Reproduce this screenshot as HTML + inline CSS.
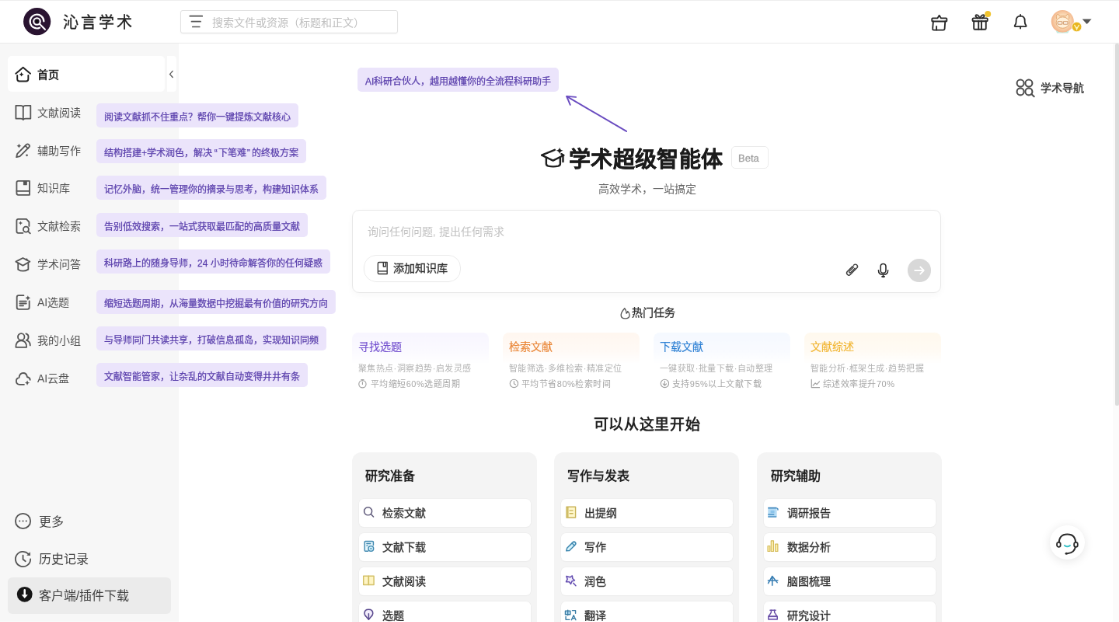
<!DOCTYPE html>
<html lang="zh-CN"><head><meta charset="utf-8"><title>沁言学术</title>
<style>
*{margin:0;padding:0}
html,body{width:1119px;height:622px;overflow:hidden;background:#fff}
#root{position:absolute;left:0;top:0;width:1440px;height:801px;transform:scale(0.777083);transform-origin:0 0;will-change:transform;font-family:"Liberation Sans",sans-serif;color:#333;overflow:hidden}
.a{position:absolute}
.t{position:absolute;white-space:nowrap}
.tip{position:absolute;height:31px;line-height:37px;padding:0 10px 0 9.6px;background:#ebe4fb;color:#5b40ad;font-size:12px;font-weight:400;-webkit-text-stroke:0.25px #5b40ad;border-radius:5px;white-space:nowrap;box-sizing:border-box}
</style></head><body><div id="root">
<div class="a" style="left:0px;top:0px;width:1440px;height:55.98px;background:#fff;border-bottom:1px solid #ebebeb;box-sizing:border-box;"></div>
<div class="a" style="left:0px;top:0px;width:1440px;height:1.42px;background:#eeeeee;"></div>
<svg class="a" style="left:30.37px;top:10.29px;width:35.26px;height:35.26px;" viewBox="0 0 27.4 27.4" >
<circle cx="13.7" cy="13.7" r="13.7" fill="#2a1431"/>
<path d="M20.5 13.6A6.9 6.9 0 1 0 16.3 20" fill="none" stroke="#fff" stroke-width="1.7" stroke-linecap="round"/>
<circle cx="13.6" cy="13.6" r="3.3" fill="none" stroke="#fff" stroke-width="1.6"/>
<circle cx="13.6" cy="13.6" r="1.5" fill="#0d0d0d"/>
<path d="M16.2 16.2L21.7 21.6" stroke="#fff" stroke-width="1.7" stroke-linecap="round"/></svg>
<div class="t" style="left:80.72px;top:19.33px;font-size:20px;line-height:20px;color:#222;font-weight:400;letter-spacing:3.1px;-webkit-text-stroke:0.32px #222;">沁言学术</div>
<div class="a" style="left:232.41px;top:12.87px;width:279.25px;height:30.63px;border:1px solid #e2e2e2;border-radius:3px;box-sizing:border-box;background:#fff;box-shadow:0 1px 2px rgba(0,0,0,.03);"></div>
<svg class="a" style="left:241.93px;top:18.02px;width:20.59px;height:20.59px;" viewBox="0 0 16 16" ><path d="M1.8 2.1H14.2M3.5 7.5H12.5M4.5 12.8H11.5" stroke="#555" stroke-width="1.3" stroke-linecap="round"/></svg>
<div class="t" style="left:273.4px;top:22.46px;font-size:14px;line-height:14px;color:#bfbfbf;font-weight:400;">搜索文件或资源（标题和正文）</div>
<div class="a" style="left:0px;top:55.98px;width:229.71px;height:744.45px;background:#f7f7f7;"></div>
<div class="a" style="left:10.29px;top:72.06px;width:202.04px;height:46.33px;background:#fff;border-radius:5px;"></div>
<div class="a" style="left:214.91px;top:72.06px;width:12.23px;height:46.33px;background:#fff;border-radius:0 4px 4px 0;"></div>
<svg class="a" style="left:216.19px;top:88.79px;width:9.01px;height:12.87px;" viewBox="0 0 7 10" ><path d="M4.8 1.8L2 5L4.8 8.2" stroke="#555" stroke-width="1" fill="none" stroke-linecap="round"/></svg>
<svg class="a" style="left:15.44px;top:79.79px;width:30.88px;height:30.88px;" viewBox="0 0 24 24" ><g fill="none" stroke="#222" stroke-width="1.5" stroke-linejoin="round" stroke-linecap="round"><path d="M4.1 11.4L11.4 5.2L18.7 11.4"/><path d="M5.6 13.1V17Q5.6 19.1 7.7 19.1H14.5Q16.6 19.1 16.6 17V13.1"/></g><path d="M9.8 10Q10.1 11.9 12 12.2Q10.1 12.5 9.8 14.4Q9.5 12.5 7.6 12.2Q9.5 11.9 9.8 10Z" fill="#222"/></svg>
<div class="t" style="left:47.94px;top:88.74px;font-size:14px;line-height:14px;color:#222;font-weight:600;">首页</div>
<svg class="a" style="left:15.44px;top:128.69px;width:30.88px;height:30.88px;" viewBox="0 0 24 24" ><g fill="none" stroke="#555" stroke-width="1.4" stroke-linejoin="round" stroke-linecap="round"><path d="M4.2 5.3H9Q11.2 5.3 11.5 6.8Q11.8 5.3 14 5.3H18.9V18.3H14Q11.8 18.3 11.5 19.4Q11.2 18.3 9 18.3H4.2Z"/><path d="M11.5 6.8V19.2"/></g></svg>
<div class="t" style="left:47.94px;top:137.64px;font-size:14px;line-height:14px;color:#555;font-weight:400;">文献阅读</div>
<svg class="a" style="left:15.44px;top:177.59px;width:30.88px;height:30.88px;" viewBox="0 0 24 24" ><g fill="none" stroke="#555" stroke-width="1.4" stroke-linejoin="round" stroke-linecap="round"><path d="M4.8 18.8L5.6 15.4L14.6 6.4Q15.9 5.1 17.2 6.4Q18.5 7.7 17.2 9L8.2 18Z"/><path d="M13.6 7.4L16.2 10"/></g><path d="M7.3 5.3Q7.6 7.2 9.5 7.5Q7.6 7.8 7.3 9.7Q7 7.8 5.1 7.5Q7 7.2 7.3 5.3Z" fill="#555"/><circle cx="15.2" cy="17" r="1" fill="#555"/></svg>
<div class="t" style="left:47.94px;top:186.54px;font-size:14px;line-height:14px;color:#555;font-weight:400;">辅助写作</div>
<svg class="a" style="left:15.44px;top:226.49px;width:30.88px;height:30.88px;" viewBox="0 0 24 24" ><g fill="none" stroke="#555" stroke-width="1.4" stroke-linejoin="round" stroke-linecap="round"><path d="M5 7Q5 5.4 6.6 5.4H17.8V19.3H6.6Q5 19.3 5 17.7Z"/><path d="M5 15.4H17.8"/></g><path d="M11.6 5.4H15.4V9.5H11.6Z" fill="#555"/></svg>
<div class="t" style="left:47.94px;top:235.44px;font-size:14px;line-height:14px;color:#555;font-weight:400;">知识库</div>
<svg class="a" style="left:15.44px;top:275.39px;width:30.88px;height:30.88px;" viewBox="0 0 24 24" ><g fill="none" stroke="#555" stroke-width="1.4" stroke-linejoin="round" stroke-linecap="round"><path d="M11.2 19.3H6.6Q5 19.3 5 17.7V7Q5 5.4 6.6 5.4H14.7L17.4 8.3V12.4"/><circle cx="14.3" cy="15.6" r="2.7"/><path d="M16.3 17.6L18.5 19.7"/></g><path d="M8.9 7.3Q9.2 9 11 9.3Q9.2 9.6 8.9 11.3Q8.6 9.6 6.8 9.3Q8.6 9 8.9 7.3Z" fill="#555"/></svg>
<div class="t" style="left:47.94px;top:284.34px;font-size:14px;line-height:14px;color:#555;font-weight:400;">文献检索</div>
<svg class="a" style="left:15.44px;top:324.29px;width:30.88px;height:30.88px;" viewBox="0 0 24 24" ><g fill="none" stroke="#555" stroke-width="1.4" stroke-linejoin="round" stroke-linecap="round"><path d="M4.2 9.8L11.2 6.2L18.1 9.8L11.2 13.8Z"/><path d="M6.4 11.8V17.6Q11.2 20.8 16.6 17.6V11.8"/></g><circle cx="14.9" cy="7.7" r="1.1" fill="#555"/></svg>
<div class="t" style="left:47.94px;top:333.24px;font-size:14px;line-height:14px;color:#555;font-weight:400;">学术问答</div>
<svg class="a" style="left:15.44px;top:373.19px;width:30.88px;height:30.88px;" viewBox="0 0 24 24" ><g fill="none" stroke="#555" stroke-width="1.4" stroke-linejoin="round" stroke-linecap="round"><path d="M12 5.6H7Q5.2 5.6 5.2 7.4V17.5Q5.2 19.3 7 19.3H15.8Q17.6 19.3 17.6 17.5V11.2"/><path d="M8 11.4H14.6M8 13.6H14.6M8 15.8H11.7"/></g><path d="M16.2 5.6Q16.5 7.8 18.7 8.1Q16.5 8.4 16.2 10.6Q15.9 8.4 13.7 8.1Q15.9 7.8 16.2 5.6Z" fill="#555"/></svg>
<div class="t" style="left:47.94px;top:382.14px;font-size:14px;line-height:14px;color:#555;font-weight:400;">AI选题</div>
<svg class="a" style="left:15.44px;top:422.09px;width:30.88px;height:30.88px;" viewBox="0 0 24 24" ><g fill="none" stroke="#555" stroke-width="1.4" stroke-linejoin="round" stroke-linecap="round"><circle cx="9.5" cy="8.9" r="3.3"/><path d="M4.2 19.3Q4.2 12.7 9.5 12.7Q14.9 12.7 14.9 19.3Z"/><path d="M14.3 5.8Q16.8 6.5 16.8 9Q16.8 11.5 14.7 12.3Q18.5 13.5 18.5 17.4"/></g></svg>
<div class="t" style="left:47.94px;top:431.04px;font-size:14px;line-height:14px;color:#555;font-weight:400;">我的小组</div>
<svg class="a" style="left:15.44px;top:470.99px;width:30.88px;height:30.88px;" viewBox="0 0 24 24" ><g fill="none" stroke="#555" stroke-width="1.4" stroke-linejoin="round" stroke-linecap="round"><path d="M12.4 18.5H8Q4.6 18.5 4.6 15Q4.6 12 7.4 11.5Q8 7 11.5 7Q15 7 15.5 11Q18.3 11.6 18.4 13.8"/></g><path d="M15.6 14.3Q15.9 16.5 18.1 16.8Q15.9 17.1 15.6 19.3Q15.3 17.1 13.1 16.8Q15.3 16.5 15.6 14.3Z" fill="#555"/></svg>
<div class="t" style="left:47.94px;top:479.94px;font-size:14px;line-height:14px;color:#555;font-weight:400;">AI云盘</div>
<div class="tip" style="left:124.44px;top:132.68px;">阅读文献抓不住重点？帮你一键提炼文献核心</div>
<div class="tip" style="left:124.44px;top:179.39px;">结构搭建+学术润色，解决<span style="margin:0 1px 0 2.6px">“</span>下笔难<span style="margin:0 2.6px 0 1px">”</span>的终极方案</div>
<div class="tip" style="left:124.44px;top:226.49px;">记忆外脑，统一管理你的摘录与思考，构建知识体系</div>
<div class="tip" style="left:124.44px;top:274.1px;">告别低效搜索，一站式获取最匹配的高质量文献</div>
<div class="tip" style="left:124.44px;top:321.2px;">科研路上的随身导师，24 小时待命解答你的任何疑惑</div>
<div class="tip" style="left:124.44px;top:372.55px;">缩短选题周期，从海量数据中挖掘最有价值的研究方向</div>
<div class="tip" style="left:124.44px;top:419.65px;">与导师同门共读共享，打破信息孤岛，实现知识同频</div>
<div class="tip" style="left:124.44px;top:466.87px;">文献智能管家，让杂乱的文献自动变得井井有条</div>
<svg class="a" style="left:15.44px;top:655.01px;width:30.88px;height:30.88px;" viewBox="0 0 24 24" ><g fill="none" stroke="#555" stroke-width="1.4" stroke-linejoin="round" stroke-linecap="round"><circle cx="11.3" cy="12" r="7.5"/></g><circle cx="8" cy="12" r=".8" fill="#555"/><circle cx="11.3" cy="12" r=".8" fill="#555"/><circle cx="14.6" cy="12" r=".8" fill="#555"/></svg>
<div class="t" style="left:49.77px;top:663.99px;font-size:16px;line-height:16px;color:#444;font-weight:400;">更多</div>
<svg class="a" style="left:15.44px;top:703.91px;width:30.88px;height:30.88px;" viewBox="0 0 24 24" ><g fill="none" stroke="#555" stroke-width="1.4" stroke-linejoin="round" stroke-linecap="round"><path d="M18.8 12A7.5 7.5 0 1 1 16.6 6.7"/><path d="M11.3 8.2V12.3L13.8 14.2"/></g><path d="M18.5 4.8L18.6 8.6L14.9 8.3Z" fill="#555"/></svg>
<div class="t" style="left:49.77px;top:712.38px;font-size:16px;line-height:16px;color:#444;font-weight:400;">历史记录</div>
<div class="a" style="left:10.04px;top:743.16px;width:209.5px;height:46.58px;background:#ebebeb;border-radius:6px;"></div>
<svg class="a" style="left:15.44px;top:750.24px;width:30.88px;height:30.88px;" viewBox="0 0 24 24" ><circle cx="13" cy="11.5" r="7.7" fill="#161616"/><path d="M13 7.3V13.2" stroke="#fff" stroke-width="2" stroke-linecap="round"/><path d="M9.8 11.8L13 15.6L16.2 11.8Z" fill="#fff"/></svg>
<div class="t" style="left:49.77px;top:758.96px;font-size:16px;line-height:16px;color:#444;font-weight:400;">客户端/插件下载</div>
<div class="a" style="left:1432.28px;top:55.98px;width:7.72px;height:744.45px;background:#fbfbfb;"></div>
<div class="a" style="left:1434.85px;top:55.98px;width:5.15px;height:466.49px;background:#dcdcdc;border-radius:2px;"></div>
<div class="tip" style="left:460.44px;top:87.25px;">AI科研合伙人，越用越懂你的全流程科研助手</div>
<svg class="a" style="left:715.5px;top:110.67px;width:102.95px;height:64.34px;" viewBox="0 0 80 50" ><g fill="none" stroke="#6a4cc0" stroke-width="1.5" stroke-linecap="round" stroke-linejoin="round"><path d="M10.5 10.2L70 45"/><path d="M19.5 10.8L10.2 10L13.8 18.6"/></g></svg>
<svg class="a" style="left:1304.88px;top:100.38px;width:28.31px;height:25.74px;" viewBox="0 0 22 20" ><g fill="none" stroke="#4d4d4d" stroke-width="1.6"><circle cx="6.3" cy="5.5" r="3.5"/><circle cx="14.7" cy="5.5" r="3.5"/><circle cx="6.3" cy="13.9" r="3.5"/><circle cx="14.7" cy="13.9" r="3.5"/><path d="M17.3 16.3L20 18.8" stroke-linecap="round" stroke-width="1.6"/></g></svg>
<div class="t" style="left:1339.18px;top:105.85px;font-size:14px;line-height:14px;color:#333;font-weight:400;-webkit-text-stroke:0.32px #333;">学术导航</div>
<svg class="a" style="left:689.76px;top:182.73px;width:46.33px;height:38.61px;" viewBox="0 0 36 30" ><g fill="none" stroke="#1f1f1f" stroke-width="1.9" stroke-linejoin="round" stroke-linecap="round">
<path d="M18.5 7.6L5.5 13L16.8 18.3L27.5 13L25.2 11.8"/><path d="M10 15.5V21.5Q10 23.2 12 23.8Q17 25 22 23.8Q24 23.2 24 21.5V15.5"/><path d="M26.8 13.5V19.5"/></g>
<path d="M23.4 5Q23.9 7.9 26.9 8.4Q23.9 8.9 23.4 11.8Q22.9 8.9 19.9 8.4Q22.9 7.9 23.4 5Z" fill="#1f1f1f"/></svg>
<div class="t" style="left:731.85px;top:191.76px;font-size:28px;line-height:28px;color:#1c1c1c;font-weight:700;letter-spacing:0.4px;-webkit-text-stroke:0.3px #1c1c1c;">学术超级智能体</div>
<div class="a" style="left:940.7px;top:187.62px;width:47.87px;height:28.95px;border:1px solid #ebebeb;border-radius:5px;box-sizing:border-box;"></div>
<div class="t" style="left:950.08px;top:196.5px;font-size:13px;line-height:13px;color:#a0a0a0;font-weight:400;-webkit-text-stroke:0.3px #a0a0a0;">Beta</div>
<div class="t" style="left:769.62px;top:236.34px;font-size:14px;line-height:14px;color:#666;font-weight:400;">高效学术，一站搞定</div>
<div class="a" style="left:452.98px;top:269.98px;width:757.96px;height:107.07px;border:1px solid #e8e8e8;border-radius:9px;box-sizing:border-box;background:#fff;box-shadow:0 3px 10px rgba(0,0,0,.035);"></div>
<div class="t" style="left:472.87px;top:290.52px;font-size:14px;line-height:14px;color:#c2c2c2;font-weight:400;">询问任何问题, 提出任何需求</div>
<div class="a" style="left:468.42px;top:327.51px;width:124.18px;height:35.39px;border:1px solid #ebebeb;border-radius:16px;box-sizing:border-box;"></div>
<div class="t" style="left:506.07px;top:338.13px;font-size:14px;line-height:14px;color:#333;font-weight:400;-webkit-text-stroke:0.32px #333;">添加知识库</div>
<div class="a" style="left:1167.96px;top:333.3px;width:29.6px;height:29.34px;background:#d8d8d8;border-radius:50%;"></div>
<svg class="a" style="left:1173.62px;top:339.09px;width:18.02px;height:18.02px;" viewBox="0 0 14 14" ><g fill="none" stroke="#fff" stroke-width="1.4" stroke-linecap="round" stroke-linejoin="round"><path d="M2.5 7H11.5M8 3.5L11.5 7L8 10.5"/></g></svg>
<div class="t" style="left:812.6px;top:394.5px;font-size:14px;line-height:14px;color:#333;font-weight:400;-webkit-text-stroke:0.32px #333;">热门任务</div>
<div class="a" style="left:452.98px;top:427.88px;width:176.04px;height:79.14px;background:linear-gradient(180deg,#f8f6ff 0%,#fbfaff 30%,#fff 50%);border-radius:8px;"></div>
<div class="t" style="left:460.64px;top:439.41px;font-size:14px;line-height:14px;color:#7350cf;font-weight:400;-webkit-text-stroke:0.15px #7350cf;">寻找选题</div>
<div class="t" style="left:460.53px;top:468.64px;font-size:11px;line-height:11px;color:#b3b3b3;font-weight:400;letter-spacing:0.5px;">聚焦热点·洞察趋势·启发灵感</div>
<svg class="a" style="left:460.44px;top:487.46px;width:12.87px;height:12.87px;" viewBox="0 0 10 10" ><g fill="none" stroke="#a0a0a0" stroke-width=".9" stroke-linecap="round" stroke-linejoin="round"><circle cx="5" cy="5.6" r="3.6"/><path d="M5 3.8V5.8M3.8 1.2H6.2"/></g></svg>
<div class="t" style="left:476.75px;top:488.97px;font-size:11px;line-height:11px;color:#a6a6a6;font-weight:400;letter-spacing:0.5px;">平均缩短60%选题周期</div>
<div class="a" style="left:647.03px;top:427.88px;width:176.04px;height:79.14px;background:linear-gradient(180deg,#fff7f0 0%,#fffaf6 30%,#fff 50%);border-radius:8px;"></div>
<div class="t" style="left:654.7px;top:439.41px;font-size:14px;line-height:14px;color:#ea8535;font-weight:400;-webkit-text-stroke:0.15px #ea8535;">检索文献</div>
<div class="t" style="left:654.59px;top:468.64px;font-size:11px;line-height:11px;color:#b3b3b3;font-weight:400;letter-spacing:0.5px;">智能筛选·多维检索·精准定位</div>
<svg class="a" style="left:654.5px;top:487.46px;width:12.87px;height:12.87px;" viewBox="0 0 10 10" ><g fill="none" stroke="#a0a0a0" stroke-width=".9" stroke-linecap="round" stroke-linejoin="round"><circle cx="5" cy="5" r="4"/><path d="M5 2.8V5.2L6.6 6.2"/></g></svg>
<div class="t" style="left:670.81px;top:488.97px;font-size:11px;line-height:11px;color:#a6a6a6;font-weight:400;letter-spacing:0.5px;">平均节省80%检索时间</div>
<div class="a" style="left:841.09px;top:427.88px;width:176.04px;height:79.14px;background:linear-gradient(180deg,#f5f9ff 0%,#f9fbff 30%,#fff 50%);border-radius:8px;"></div>
<div class="t" style="left:848.76px;top:439.41px;font-size:14px;line-height:14px;color:#2b7fd4;font-weight:400;-webkit-text-stroke:0.15px #2b7fd4;">下载文献</div>
<div class="t" style="left:848.65px;top:468.64px;font-size:11px;line-height:11px;color:#b3b3b3;font-weight:400;letter-spacing:0.5px;">一键获取·批量下载·自动整理</div>
<svg class="a" style="left:848.56px;top:487.46px;width:12.87px;height:12.87px;" viewBox="0 0 10 10" ><g fill="none" stroke="#a0a0a0" stroke-width=".9" stroke-linecap="round" stroke-linejoin="round"><circle cx="5" cy="5" r="4"/><path d="M5 2.8V7M3.3 5.4L5 7.1L6.7 5.4"/></g></svg>
<div class="t" style="left:864.87px;top:488.97px;font-size:11px;line-height:11px;color:#a6a6a6;font-weight:400;letter-spacing:0.5px;">支持95%以上文献下载</div>
<div class="a" style="left:1035.15px;top:427.88px;width:176.04px;height:79.14px;background:linear-gradient(180deg,#fff9ee 0%,#fffbf4 30%,#fff 50%);border-radius:8px;"></div>
<div class="t" style="left:1042.82px;top:439.41px;font-size:14px;line-height:14px;color:#f2b530;font-weight:400;-webkit-text-stroke:0.15px #f2b530;">文献综述</div>
<div class="t" style="left:1042.71px;top:468.64px;font-size:11px;line-height:11px;color:#b3b3b3;font-weight:400;letter-spacing:0.5px;">智能分析·框架生成·趋势把握</div>
<svg class="a" style="left:1042.62px;top:487.46px;width:12.87px;height:12.87px;" viewBox="0 0 10 10" ><g fill="none" stroke="#a0a0a0" stroke-width=".9" stroke-linecap="round" stroke-linejoin="round"><path d="M1 1V9H9.5"/><path d="M2.5 7L4.8 4.5L6.3 6L9 3"/></g></svg>
<div class="t" style="left:1058.92px;top:488.97px;font-size:11px;line-height:11px;color:#a6a6a6;font-weight:400;letter-spacing:0.5px;">综述效率提升70%</div>
<div class="t" style="left:763.7px;top:536.7px;font-size:19px;line-height:19px;color:#222;font-weight:700;letter-spacing:0.7px;">可以从这里开始</div>
<div class="a" style="left:452.98px;top:581.66px;width:238.33px;height:257.37px;background:#f4f4f4;border-radius:12px;"></div>
<div class="t" style="left:470.45px;top:604.67px;font-size:16px;line-height:16px;color:#1f1f1f;font-weight:700;">研究准备</div>
<div class="a" style="left:461.98px;top:641.63px;width:221.08px;height:36.29px;background:#fff;border-radius:6px;box-shadow:0 0 0 .6px #ebebeb,0 1px 2px rgba(0,0,0,.04);"></div>
<div class="t" style="left:491.91px;top:652.64px;font-size:14px;line-height:14px;color:#333;font-weight:400;-webkit-text-stroke:0.32px #333;">检索文献</div>
<div class="a" style="left:461.98px;top:685.64px;width:221.08px;height:36.29px;background:#fff;border-radius:6px;box-shadow:0 0 0 .6px #ebebeb,0 1px 2px rgba(0,0,0,.04);"></div>
<div class="t" style="left:491.91px;top:696.65px;font-size:14px;line-height:14px;color:#333;font-weight:400;-webkit-text-stroke:0.32px #333;">文献下载</div>
<div class="a" style="left:461.98px;top:729.65px;width:221.08px;height:36.29px;background:#fff;border-radius:6px;box-shadow:0 0 0 .6px #ebebeb,0 1px 2px rgba(0,0,0,.04);"></div>
<div class="t" style="left:491.91px;top:740.66px;font-size:14px;line-height:14px;color:#333;font-weight:400;-webkit-text-stroke:0.32px #333;">文献阅读</div>
<div class="a" style="left:461.98px;top:773.66px;width:221.08px;height:36.29px;background:#fff;border-radius:6px;box-shadow:0 0 0 .6px #ebebeb,0 1px 2px rgba(0,0,0,.04);"></div>
<div class="t" style="left:491.91px;top:784.67px;font-size:14px;line-height:14px;color:#333;font-weight:400;-webkit-text-stroke:0.32px #333;">选题</div>
<div class="a" style="left:712.92px;top:581.66px;width:238.33px;height:257.37px;background:#f4f4f4;border-radius:12px;"></div>
<div class="t" style="left:730.4px;top:604.67px;font-size:16px;line-height:16px;color:#1f1f1f;font-weight:700;">写作与发表</div>
<div class="a" style="left:721.93px;top:641.63px;width:221.08px;height:36.29px;background:#fff;border-radius:6px;box-shadow:0 0 0 .6px #ebebeb,0 1px 2px rgba(0,0,0,.04);"></div>
<div class="t" style="left:751.86px;top:652.64px;font-size:14px;line-height:14px;color:#333;font-weight:400;-webkit-text-stroke:0.32px #333;">出提纲</div>
<div class="a" style="left:721.93px;top:685.64px;width:221.08px;height:36.29px;background:#fff;border-radius:6px;box-shadow:0 0 0 .6px #ebebeb,0 1px 2px rgba(0,0,0,.04);"></div>
<div class="t" style="left:751.86px;top:696.65px;font-size:14px;line-height:14px;color:#333;font-weight:400;-webkit-text-stroke:0.32px #333;">写作</div>
<div class="a" style="left:721.93px;top:729.65px;width:221.08px;height:36.29px;background:#fff;border-radius:6px;box-shadow:0 0 0 .6px #ebebeb,0 1px 2px rgba(0,0,0,.04);"></div>
<div class="t" style="left:751.86px;top:740.66px;font-size:14px;line-height:14px;color:#333;font-weight:400;-webkit-text-stroke:0.32px #333;">润色</div>
<div class="a" style="left:721.93px;top:773.66px;width:221.08px;height:36.29px;background:#fff;border-radius:6px;box-shadow:0 0 0 .6px #ebebeb,0 1px 2px rgba(0,0,0,.04);"></div>
<div class="t" style="left:751.86px;top:784.67px;font-size:14px;line-height:14px;color:#333;font-weight:400;-webkit-text-stroke:0.32px #333;">翻译</div>
<div class="a" style="left:974.16px;top:581.66px;width:238.33px;height:257.37px;background:#f4f4f4;border-radius:12px;"></div>
<div class="t" style="left:991.63px;top:604.67px;font-size:16px;line-height:16px;color:#1f1f1f;font-weight:700;">研究辅助</div>
<div class="a" style="left:983.16px;top:641.63px;width:221.08px;height:36.29px;background:#fff;border-radius:6px;box-shadow:0 0 0 .6px #ebebeb,0 1px 2px rgba(0,0,0,.04);"></div>
<div class="t" style="left:1013.09px;top:652.64px;font-size:14px;line-height:14px;color:#333;font-weight:400;-webkit-text-stroke:0.32px #333;">调研报告</div>
<div class="a" style="left:983.16px;top:685.64px;width:221.08px;height:36.29px;background:#fff;border-radius:6px;box-shadow:0 0 0 .6px #ebebeb,0 1px 2px rgba(0,0,0,.04);"></div>
<div class="t" style="left:1013.09px;top:696.65px;font-size:14px;line-height:14px;color:#333;font-weight:400;-webkit-text-stroke:0.32px #333;">数据分析</div>
<div class="a" style="left:983.16px;top:729.65px;width:221.08px;height:36.29px;background:#fff;border-radius:6px;box-shadow:0 0 0 .6px #ebebeb,0 1px 2px rgba(0,0,0,.04);"></div>
<div class="t" style="left:1013.09px;top:740.66px;font-size:14px;line-height:14px;color:#333;font-weight:400;-webkit-text-stroke:0.32px #333;">脑图梳理</div>
<div class="a" style="left:983.16px;top:773.66px;width:221.08px;height:36.29px;background:#fff;border-radius:6px;box-shadow:0 0 0 .6px #ebebeb,0 1px 2px rgba(0,0,0,.04);"></div>
<div class="t" style="left:1013.09px;top:784.67px;font-size:14px;line-height:14px;color:#333;font-weight:400;-webkit-text-stroke:0.32px #333;">研究设计</div>
<div class="a" style="left:1351.46px;top:675.99px;width:44.4px;height:44.4px;background:#fff;border-radius:50%;box-shadow:0 2px 14px rgba(0,0,0,.11);"></div>
<svg class="a" style="left:1358.28px;top:684.61px;width:30.88px;height:30.88px;" viewBox="0 0 24 24" ><g fill="none" stroke="#2a2a2a" stroke-width="1.6" stroke-linecap="round"><path d="M3.6 11.5Q3.6 2 12 2Q20.4 2 20.4 11.5"/><path d="M20.2 14Q19.5 20.6 12 21.2"/></g><g fill="#fff" stroke="#2a2a2a" stroke-width="1.4"><rect x="1.6" y="10" width="3.6" height="4.6" rx="1.8"/><rect x="18.8" y="10" width="3.6" height="4.6" rx="1.8"/></g><circle cx="11" cy="21.2" r="1.2" fill="#2a2a2a"/><path d="M9.3 13.2Q12 15.2 14.7 13.2" fill="none" stroke="#38c2c8" stroke-width="1.6" stroke-linecap="round"/></svg>
<svg class="a" style="left:0;top:0;width:1440px;height:800.3px" viewBox="0 0 1119 622"><g fill="none" stroke="#3a3a3a" stroke-width="1.1" stroke-linejoin="round"><path d="M377.9 263.4Q377.9 262.3 379 262.3H387.1V274H379Q377.9 274 377.9 272.9Z"/><path d="M377.9 271.2H387.1"/><path d="M383.3 262.3V266.6H385.6V262.3"/></g><g fill="none" stroke="#3f3f3f" stroke-width="1.1" stroke-linecap="round" stroke-linejoin="round"><path d="M853.7 265.2L853.9 265A2.1 2.1 0 0 1 856.9 268L850.4 274.5A2.1 2.1 0 0 1 847.4 271.5L852.7 266.2"/><path d="M854.94 268.24L850.64 272.54A.9 .9 0 0 1 849.36 271.26L853.66 266.96"/></g><g fill="none" stroke="#2c2c2c" stroke-width="1.2" stroke-linecap="round"><rect x="880.6" y="263.8" width="5.3" height="9.3" rx="2.65"/><path d="M878.5 270.2Q878.5 274.6 883.25 274.6Q888 274.6 888 270.2M883.25 274.6V276.2"/></g><ellipse cx="883.25" cy="276.7" rx="2" ry=".9" fill="#2c2c2c"/><path d="M624.6 308.4Q621 312.6 621 315Q621 318.6 625.3 318.6Q629.5 318.6 629.5 315Q629.5 312.8 627.6 311.4Q627.4 312.9 626.4 313.4Q626.5 310.6 624.6 308.4Z" fill="none" stroke="#555" stroke-width="1.05" stroke-linejoin="round"/><g fill="none" stroke="#2a2a2a" stroke-width="1.45" stroke-linejoin="round" stroke-linecap="round" transform="translate(928 12)"><path d="M4.6 6.2H9.5L11.3 3.4L13.1 6.2H18.2Q18.8 6.2 18.8 6.8V8.8Q18.8 9.4 18.2 9.4H4.6Q4 9.4 4 8.8V6.8Q4 6.2 4.6 6.2Z"/><path d="M5.3 9.4L4.7 16.5Q4.5 18 6 18H15.2Q16.6 18 16.7 16.6L17.2 9.4"/><path d="M8.5 14.3V18"/></g><g fill="none" stroke="#2a2a2a" stroke-width="1.45" stroke-linejoin="round" stroke-linecap="round"><rect x="972.6" y="18.2" width="15" height="3" rx="1"/><path d="M973.9 21.2V28.3Q973.9 29.3 974.9 29.3H985Q986 29.3 986 28.3V21.2"/><path d="M978.6 21.2V29.3M981.5 21.2V29.3"/><path d="M980 18.2Q977.5 13.8 975.9 15.2Q975.1 16.7 977.7 18.2M980 18.2Q982.5 13.8 984.1 15.2Q984.9 16.7 982.3 18.2"/></g><circle cx="987.9" cy="14" r="3.1" fill="#f0c32e"/><g fill="none" stroke="#2a2a2a" stroke-width="1.4" stroke-linejoin="round" stroke-linecap="round"><path d="M1014.9 25.4Q1016.2 24 1016.2 21.5V20.6Q1016.2 16.1 1020.5 16.1Q1024.8 16.1 1024.8 20.6V21.5Q1024.8 24 1026.1 25.4Q1026.8 26.5 1025.6 26.5H1015.4Q1014.2 26.5 1014.9 25.4Z"/><path d="M1020.5 14.6V16.1M1020.5 26.5V28.4"/></g><defs><radialGradient id="av" cx="1063" cy="21" r="11.5" gradientUnits="userSpaceOnUse"><stop offset="0" stop-color="#fff1dc"/><stop offset=".55" stop-color="#fbdcb8"/><stop offset="1" stop-color="#f3b58a"/></radialGradient></defs>
<circle cx="1062.6" cy="21.4" r="11.3" fill="url(#av)"/>
<path d="M1056.5 19Q1056 13.5 1058.5 14.5L1060 16.3Q1062.8 15.4 1065.6 16.3L1067.2 14.5Q1069.6 13.5 1069.1 19" fill="#fde3c2" stroke="#e0a36c" stroke-width=".7"/>
<ellipse cx="1062.8" cy="22.6" rx="6.6" ry="5.6" fill="#fff0da" stroke="#e0a36c" stroke-width=".7"/>
<path d="M1057.8 21.6H1062.2V24.2H1057.8ZM1063.4 21.6H1067.8V24.2H1063.4Z" fill="#fffaf2" stroke="#c98b58" stroke-width=".7"/>
<path d="M1056 30.5Q1062.6 34.5 1069.2 30.5L1068 33H1057Z" fill="#bfe8dc"/>
<circle cx="1076.8" cy="26.8" r="4.9" fill="#e9b620" stroke="#fff" stroke-width=".6"/>
<path d="M1074.6 25.2L1076.8 28.9L1079 25.2M1076.8 27.6V29.8" fill="none" stroke="#fff6c0" stroke-width="1.1" stroke-linecap="round" stroke-linejoin="round"/>
<path d="M1082.3 19H1091.6L1086.95 24Z" fill="#555"/><g fill="none" stroke="#5d5879" stroke-width="1.15" stroke-linecap="round"><circle cx="368" cy="511.3" r="3.9"/><path d="M371 514.4L373.4 516.9"/></g><g stroke="#3f88b0" stroke-width="1.1" stroke-linecap="round" stroke-linejoin="round"><path d="M368 551.2H365.3Q364.6 551.2 364.6 550.5V542Q364.6 541.3 365.3 541.3H372.4Q373.3 541.3 373.3 542.2V545.2" fill="#e6f6fc"/><path d="M366.7 543.6H370.4M366.7 545.7H367.5" fill="none"/><circle cx="370.9" cy="548.7" r="2.6" fill="#cdeefa"/><circle cx="370.9" cy="548.7" r=".8" fill="#3f88b0" stroke="none"/></g><g stroke="#d3c066" stroke-width="1.1" stroke-linejoin="round" fill="#fff5c4"><path d="M363.4 576.1H368.6V584.9H363.4Z"/><path d="M368.6 576.1H373.8V584.9H368.6Z"/></g><g fill="none" stroke="#5a4a8f" stroke-width="1.2" stroke-linecap="round" stroke-linejoin="round"><path d="M368.6 619.6L366 616.6Q364.4 614.9 364.4 613.4Q364.4 609.5 368.6 609.5Q372.8 609.5 372.8 613.4Q372.8 614.9 371.2 616.6Z" fill="#f3eefc"/><path d="M368.6 613.8V619"/></g><g stroke="#c9b458" stroke-width="1.1" stroke-linejoin="round"><rect x="566.5" y="507" width="9" height="10.6" fill="#fff7cc"/><path d="M567.9 507V517.6M569.3 510.5H573.2M569.3 513.6H573.2" fill="none"/></g><g stroke="#3f88b0" stroke-width="1.15" stroke-linejoin="round" stroke-linecap="round"><path d="M566.3 550.9L567 548.2L572.8 542.4Q574 541.2 575.2 542.4Q576.4 543.6 575.2 544.8L569.4 550.6Z" fill="#d6f3fc"/><path d="M572 543.2L574.4 545.6" fill="none"/></g><g stroke="#6650b2" stroke-width="1.2" stroke-linejoin="round" stroke-linecap="round" fill="none"><path d="M566.4 576.3L570.1 577.3L572.2 575.9L572.6 578.6L574.6 580.4L571.9 581.3L570.8 584.1L569.2 582L566.1 581.9L567.4 579.3Z" fill="#f0ebfd"/><path d="M573.3 583.1L575.8 585.8"/></g><g stroke="#3b7ea6" stroke-width="1.1" stroke-linejoin="round" stroke-linecap="round" fill="none"><path d="M565.3 611H570.3V614.6H565.3Z" fill="#bfe3f7"/><path d="M567.8 610.2V615.4"/><path d="M572.3 610.6H575.5V613.4"/><path d="M565.8 616.6V619.7H569.5"/><path d="M571.5 620L573.6 615.3L575.8 620M572.4 618.5H574.9"/></g><g stroke-linejoin="round"><path d="M768 508H776.8V516.8H768Z" fill="#b5dcf5"/><path d="M768 508H776.6" stroke="#3e86bd" stroke-width="1.3"/><path d="M776.6 508.2Q778.2 508.4 777.8 510.4" stroke="#3e86bd" stroke-width="1.1" fill="none"/><path d="M768 514.5H774.2M768 516.8H776.5" stroke="#4a90c4" stroke-width="1.1"/><path d="M770.6 510.6H774.4V513H770.6Z" fill="#8cc4ea"/></g><g stroke="#d4bb58" stroke-width=".9" fill="#fdefb0" stroke-linejoin="round"><rect x="767.8" y="546" width="2.2" height="5.4"/><rect x="771.1" y="540.8" width="2.5" height="10.6"/><rect x="775.3" y="544.2" width="2.5" height="7.2"/></g><g stroke="#3b80b5" stroke-width="1.2" stroke-linecap="round" fill="none"><path d="M772.3 576.3L768.2 583.4M772.3 576.3L777.2 582.6M768.1 580.5H777.8M772.3 576.3V585.4"/></g><g stroke="#6a50a8" stroke-width="1.15" stroke-linejoin="round" stroke-linecap="round"><path d="M770.1 610.3H775.6" fill="none"/><path d="M771.2 610.3V612.6L768.5 616.6H777.2L774.5 612.6V610.3" fill="none"/><path d="M768.4 616.6H777.3V619.5H768.4Z" fill="#efe9fc"/></g></svg></div></body></html>
